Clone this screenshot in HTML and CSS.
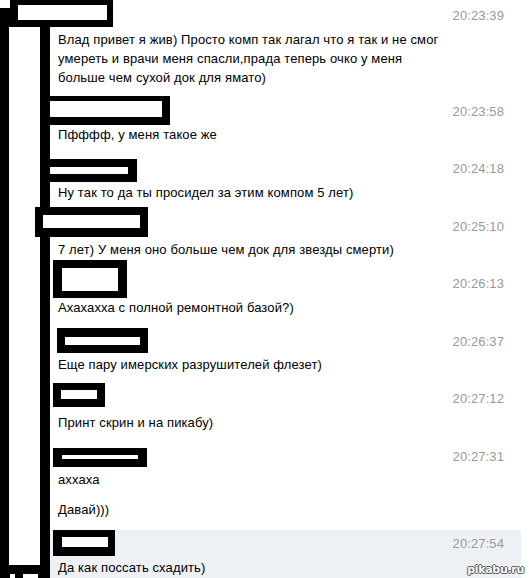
FILE: index.html
```html
<!DOCTYPE html>
<html lang="ru">
<head>
<meta charset="utf-8">
<link rel="stylesheet" href="styles.css">
</head>
<body>
<div class="page">
  <div class="chat">
    <div class="msg">
      <div class="head"><span class="time">20:23:39</span></div>
      <div class="text">Влад привет я жив) Просто комп так лагал что я так и не смог умереть и врачи меня спасли,прада теперь очко у меня больше чем сухой док для ямато)</div>
    </div>
    <div class="msg">
      <div class="head"><span class="time">20:23:58</span></div>
      <div class="text">Пфффф, у меня такое же</div>
    </div>
    <div class="msg">
      <div class="head"><span class="time">20:24:18</span></div>
      <div class="text">Ну так то да ты просидел за этим компом 5 лет)</div>
    </div>
    <div class="msg">
      <div class="head"><span class="time">20:25:10</span></div>
      <div class="text">7 лет) У меня оно больше чем док для звезды смерти)</div>
    </div>
    <div class="msg">
      <div class="head"><span class="time">20:26:13</span></div>
      <div class="text">Ахахахха с полной ремонтной базой?)</div>
    </div>
    <div class="msg">
      <div class="head"><span class="time">20:26:37</span></div>
      <div class="text">Еще пару имерских разрушителей флезет)</div>
    </div>
    <div class="msg">
      <div class="head"><span class="time">20:27:12</span></div>
      <div class="text">Принт скрин и на пикабу)</div>
    </div>
    <div class="msg">
      <div class="head"><span class="time">20:27:31</span></div>
      <div class="text">аххаха</div>
      <div class="text">Давай)))</div>
    </div>
    <div class="msg selected">
      <div class="head"><span class="time">20:27:54</span></div>
      <div class="text">Да как поссать схадить)</div>
    </div>
  </div>

  <svg class="redact" width="529" height="578" viewBox="0 0 529 578" aria-hidden="true">
    <!-- left avatar column -->
    <rect x="0" y="8" width="50" height="570" fill="#000"/>
    <rect x="9" y="27" width="31" height="538" fill="#fff"/>
    <rect x="10" y="574" width="5" height="4" fill="#fff"/>
    <rect x="23" y="574" width="15" height="4" fill="#fff"/>
    <!-- name boxes -->
    <rect x="10" y="0" width="103" height="27" fill="#000"/>
    <rect x="18" y="5" width="89" height="15" fill="#fff"/>

    <rect x="40" y="96" width="130" height="29" fill="#000"/>
    <rect x="50" y="101" width="112" height="16" fill="#fff"/>

    <rect x="40" y="159" width="97" height="23" fill="#000"/>
    <rect x="50" y="167" width="78" height="7" fill="#fff"/>

    <rect x="35" y="207" width="113" height="30" fill="#000"/>
    <rect x="43" y="215" width="97" height="13" fill="#fff"/>

    <rect x="53" y="260" width="74" height="38" fill="#000"/>
    <rect x="62" y="268" width="56" height="23" fill="#fff"/>

    <rect x="57" y="328" width="91" height="25" fill="#000"/>
    <rect x="65" y="337" width="75" height="8" fill="#fff"/>

    <rect x="53" y="383" width="52" height="24" fill="#000"/>
    <rect x="61" y="390" width="36" height="9" fill="#fff"/>

    <rect x="53" y="448" width="94" height="19" fill="#000"/>
    <rect x="62" y="455" width="76" height="4" fill="#fff"/>

    <rect x="53" y="530" width="62" height="26" fill="#000"/>
    <rect x="62" y="537" width="46" height="10" fill="#fff"/>
  </svg>

  <div class="watermark">pikabu.ru</div>
</div>
</body>
</html>
```

FILE: styles.css
```css
html, body {
  margin: 0;
  padding: 0;
  background: #fff;
}

.page {
  position: relative;
  width: 529px;
  height: 578px;
  overflow: hidden;
  font-family: "Liberation Sans", Arial, sans-serif;
}

.chat {
  margin-left: 50px;
  width: 471px;
  padding-top: 2px;
}

.msg {
  padding: 4px 17px 11px 8px;
}

.msg.selected {
  background: #edf1f5;
}

.head {
  height: 18px;
  line-height: 18px;
  text-align: right;
}

.time {
  font-size: 13px;
  color: #999;
  letter-spacing: 0.1px;
}

.text {
  margin-top: 5.5px;
  max-width: 385px;
  font-size: 13px;
  line-height: 19px;
  letter-spacing: 0.12px;
  color: #000;
}

.text + .text {
  margin-top: 11px;
}

.redact {
  position: absolute;
  left: 0;
  top: 0;
}

.watermark {
  position: absolute;
  right: 5px;
  bottom: 2px;
  font-family: "DejaVu Sans", sans-serif;
  font-size: 11px;
  font-weight: bold;
  letter-spacing: -0.3px;
  color: #fff;
  text-shadow: 1px 0 0 #555, -1px 0 0 #555, 0 1px 0 #555, 0 -1px 0 #555;
}
```
